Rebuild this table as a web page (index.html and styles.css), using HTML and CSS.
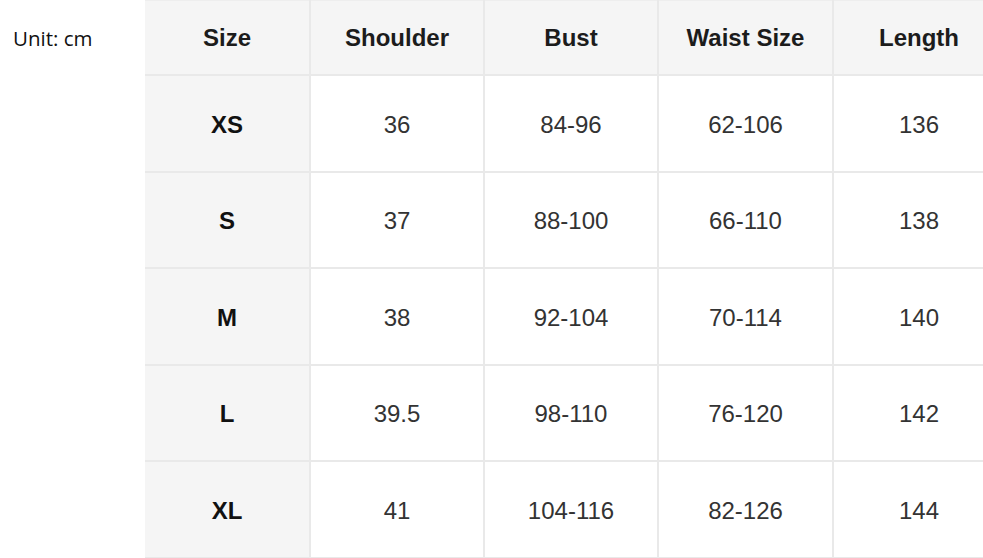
FILE: index.html
```html
<!DOCTYPE html>
<html>
<head>
<meta charset="utf-8">
<link rel="stylesheet" href="styles.css">
</head>
<body>
<div class="page">
  <div class="unit">Unit: cm</div>
  <table class="chart">
    <colgroup>
      <col class="c1"><col class="c2"><col class="c3"><col class="c4"><col class="c5">
    </colgroup>
    <thead>
      <tr><th>Size</th><th>Shoulder</th><th>Bust</th><th>Waist Size</th><th>Length</th></tr>
    </thead>
    <tbody>
      <tr><th>XS</th><td>36</td><td>84-96</td><td>62-106</td><td>136</td></tr>
      <tr><th>S</th><td>37</td><td>88-100</td><td>66-110</td><td>138</td></tr>
      <tr><th>M</th><td>38</td><td>92-104</td><td>70-114</td><td>140</td></tr>
      <tr><th>L</th><td>39.5</td><td>98-110</td><td>76-120</td><td>142</td></tr>
      <tr><th>XL</th><td>41</td><td>104-116</td><td>82-126</td><td>144</td></tr>
    </tbody>
  </table>
</div>
</body>
</html>
```
FILE: styles.css
```css
html, body {
  margin: 0;
  padding: 0;
  background: #ffffff;
}
.page {
  display: flex;
  align-items: flex-start;
  width: 983px;
  height: 558px;
  overflow: hidden;
}
.unit {
  flex: none;
  width: 145px;
  box-sizing: border-box;
  padding: 24px 0 0 13px;
  font-family: "Open Sans", "Noto Sans", sans-serif;
  font-size: 20.5px;
  color: #111;
}
.chart {
  flex: none;
  border-collapse: collapse;
  table-layout: fixed;
  width: 860px;
  font-family: "Liberation Sans", Arial, sans-serif;
  font-size: 24px;
  color: #333;
}
.c1 { width: 165px; }
.c2 { width: 174px; }
.c3 { width: 174px; }
.c4 { width: 175px; }
.c5 { width: 172px; }
.chart th, .chart td {
  border: 2px solid #e9e9e9;
  text-align: center;
  vertical-align: middle;
  padding: 0;
}
.chart thead th {
  height: 73px;
  background: #f5f5f5;
  font-weight: bold;
  color: #1c1c1c;
}
.chart tbody tr {
  height: 96.5px;
}
.chart tbody th,
.chart tbody td {
  padding-top: 3px;
}
.chart tbody th {
  background: #f5f5f5;
  font-weight: bold;
  color: #111;
}
.chart tbody td {
  background: #ffffff;
  font-weight: normal;
}
.chart thead tr:first-child th {
  border-top: 1px solid #eeeeee;
}
.chart tr > :first-child {
  border-left: none;
}
```
